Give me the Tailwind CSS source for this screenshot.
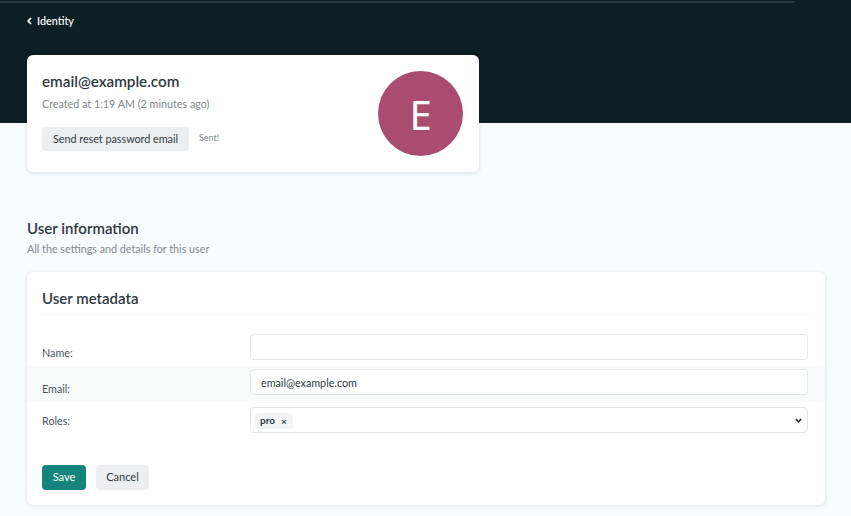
<!DOCTYPE html>
<html>
<head>
<meta charset="utf-8">
<script src="https://cdn.jsdelivr.net/npm/@tailwindcss/browser@4"></script>
</head>
<body class="bg-[#f7fcfd] font-['Lato','Noto_Sans',sans-serif] text-[#2e3a40] overflow-hidden">
<div class="w-[851px] h-[516px] overflow-hidden">
  <header class="h-[123px] bg-[#0e1e25] pt-px">
    <div class="h-[2px] w-[795px] bg-[#26373e]"></div>
    <a class="mt-[11px] ml-[27px] flex h-[14px] items-center gap-[5px] text-[10.75px] font-semibold leading-none text-[#f4f8f8]">
      <svg width="5" height="8" viewBox="0 0 5 8"><path d="M4 1 1.2 4 4 7" fill="none" stroke="#fff" stroke-width="1.8"/></svg>
      <span>Identity</span>
    </a>
  </header>

  <section class="relative ml-[27px] mt-[-68px] flex h-[117px] w-[452px] items-center justify-between rounded-md bg-white pl-[15px] pr-[16px] shadow-[0_1px_4px_rgba(14,30,37,0.14)]">
    <div class="self-start pt-[16px]">
      <h1 class="text-[15.25px] font-semibold leading-[20px] text-[#2e3a40]">email@example.com</h1>
      <p class="mt-[6px] text-[10.75px] leading-[14px] text-[#7f888c]">Created at 1:19 AM (2 minutes ago)</p>
      <div class="mt-[16px] flex items-start gap-[10px]">
        <button class="h-[24px] w-[147px] rounded bg-[#eceef0] text-[10.75px] text-[#2e3a40]">Send reset password email</button>
        <span class="mt-[5px] text-[9px] leading-[12px] text-[#7f888c]">Sent!</span>
      </div>
    </div>
    <div class="flex h-[85px] w-[85px] items-center justify-center rounded-full bg-[#aa4c70] pt-[3px] font-['Noto_Sans',sans-serif] text-[40px] leading-none text-white">E</div>
  </section>

  <section class="ml-[27px] mt-[46px]">
    <h2 class="text-[15px] font-semibold leading-[20px] text-[#2e3a40]">User information</h2>
    <p class="mt-[4px] text-[10.75px] leading-[14px] text-[#7f888c]">All the settings and details for this user</p>
  </section>

  <section class="ml-[27px] mt-[16px] h-[233px] w-[798px] rounded-md bg-white pt-[16px] shadow-[0_1px_4px_rgba(14,30,37,0.12)]">
    <div class="mx-[15px] h-[27px] border-b border-[#f4f5f5]">
      <h3 class="text-[15px] font-semibold leading-[20px] text-[#2e3a40]">User metadata</h3>
    </div>
    <div class="mt-[19px] flex h-[32px] pl-[15px] pr-[17px]">
      <label class="w-[208px] pt-[12px] text-[10.75px] leading-[14px] text-[#4a555a]">Name:</label>
      <div class="h-[26px] flex-1 rounded border border-[#e4e7e8] bg-white"></div>
    </div>
    <div class="flex h-[35px] bg-[#f9fafa] pl-[15px] pr-[17px]">
      <label class="w-[208px] pt-[16px] text-[10.75px] leading-[14px] text-[#4a555a]">Email:</label>
      <div class="mt-[3px] flex h-[26px] flex-1 items-center rounded border border-[#e4e7e8] bg-white pl-[10px] pt-[2px] text-[10.75px] text-[#2e3a40]">email@example.com</div>
    </div>
    <div class="mt-[6px] flex h-[26px] pl-[15px] pr-[17px]">
      <label class="w-[208px] pt-[7px] text-[10.75px] leading-[14px] text-[#4a555a]">Roles:</label>
      <div class="flex flex-1 items-center justify-between rounded border border-[#e4e7e8] bg-white pl-[4px] pr-[5px]">
        <span class="mt-px flex h-[16px] w-[38px] items-center gap-[6px] rounded-sm bg-[#f2f4f5] pl-[5px] text-[10px] font-bold text-[#2e3a40]">pro<span class="text-[10px] leading-none">×</span></span>
        <svg width="7" height="5" viewBox="0 0 7 5"><path d="M.8 1 3.5 3.8 6.2 1" fill="none" stroke="#1f2a30" stroke-width="1.6"/></svg>
      </div>
    </div>
    <div class="ml-[15px] mt-[32px] flex gap-[10px]">
      <button class="h-[25px] w-[44px] rounded bg-[#15847a] text-[11px] text-white">Save</button>
      <button class="h-[25px] w-[53px] rounded bg-[#eceef0] text-[11px] text-[#2e3a40]">Cancel</button>
    </div>
  </section>
</div>
</body>
</html>
